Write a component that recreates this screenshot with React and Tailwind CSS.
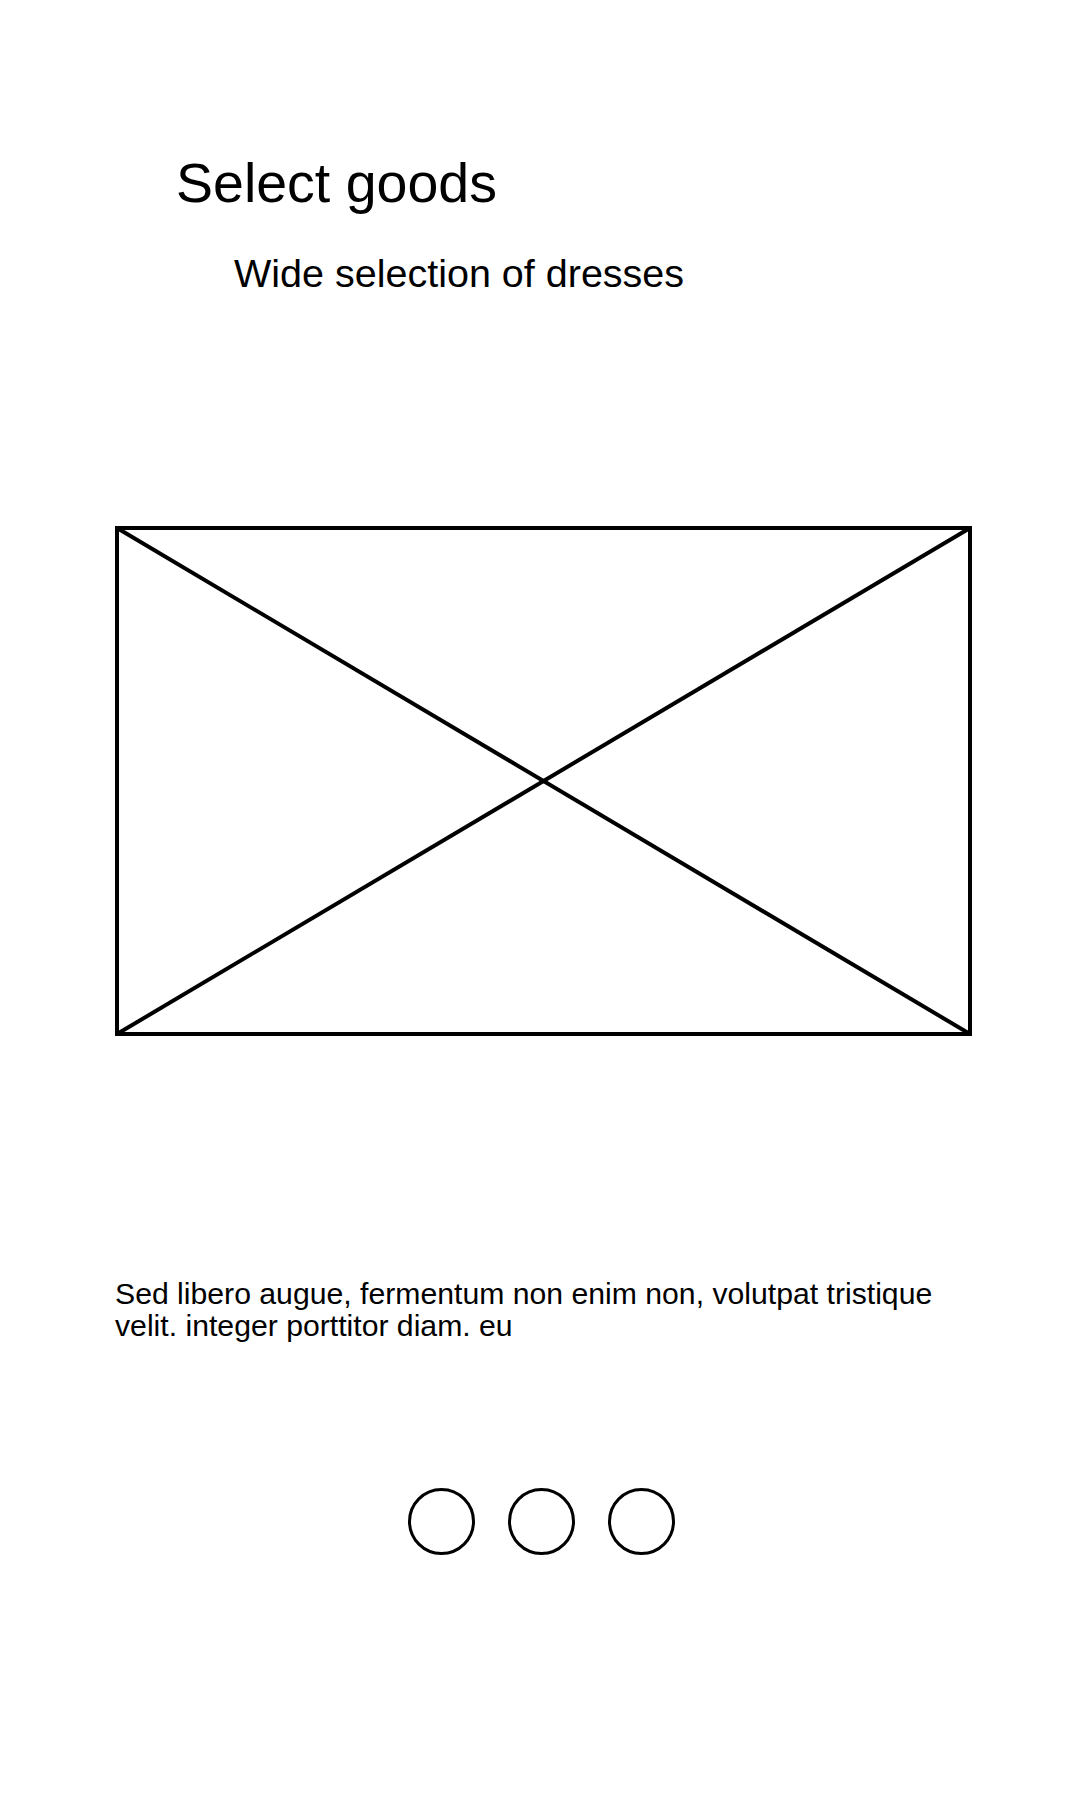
import React from "react";

export default function App() {
  return (
    <div className="w-[1080px] min-h-[1800px] bg-white text-black" style={{ fontFamily: '"Liberation Sans", Arial, sans-serif' }}>
      <div className="pt-[156px] pl-[176px]">
        <h1 className="text-[55.5px] leading-[55px] font-normal">Select goods</h1>
      </div>
      <div className="mt-[43px] pl-[234px]">
        <p className="text-[39.5px] leading-[39.5px]">Wide selection of dresses</p>
      </div>
      <div className="mt-[232px] pl-[115px]">
        <svg width="857" height="510" viewBox="0 0 857 510" className="block">
          <rect x="2" y="2" width="853" height="506" fill="none" stroke="#000" strokeWidth="4" />
          <line x1="2" y1="2" x2="855" y2="508" stroke="#000" strokeWidth="4" />
          <line x1="855" y1="2" x2="2" y2="508" stroke="#000" strokeWidth="4" />
        </svg>
      </div>
      <div className="mt-[242px] pl-[115px]">
        <p className="w-[857px] text-[30.2px] leading-[32px]">
          Sed libero augue, fermentum non enim non, volutpat tristique velit. integer porttitor diam. eu
        </p>
      </div>
      <div className="mt-[146px] flex justify-center gap-[33px] pl-[2px]">
        <div className="w-[67px] h-[67px] rounded-full border-[3px] border-black" />
        <div className="w-[67px] h-[67px] rounded-full border-[3px] border-black" />
        <div className="w-[67px] h-[67px] rounded-full border-[3px] border-black" />
      </div>
    </div>
  );
}
